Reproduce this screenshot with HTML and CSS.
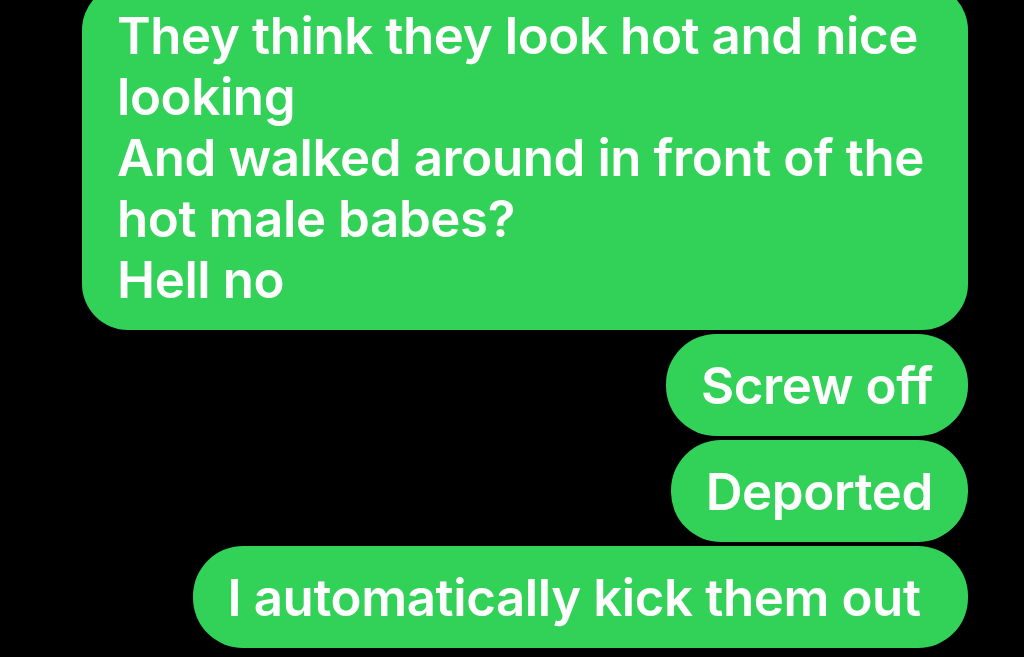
FILE: index.html
```html
<!DOCTYPE html>
<html>
<head>
<meta charset="utf-8">
<link rel="stylesheet" href="styles.css">
</head>
<body>
<div class="thread">
  <div class="bubble wide">They think they look hot and nice looking
And walked around in front of the hot male babes?
Hell no</div>
  <div class="bubble">Screw off</div>
  <div class="bubble">Deported</div>
  <div class="bubble">I automatically kick them out&nbsp;</div>
</div>
</body>
</html>
```

FILE: styles.css
```css
html, body {
  margin: 0;
  padding: 0;
  background: #000;
  height: 100%;
  overflow: hidden;
}
.thread {
  display: flex;
  flex-direction: column;
  align-items: flex-end;
  gap: 4px;
  padding-right: 56px;
  margin-top: -16px;
}
.bubble {
  background: #32d158;
  color: #fff;
  font-family: Inter, "Liberation Sans", sans-serif;
  font-weight: 600;
  font-size: 51px;
  line-height: 61px;
  letter-spacing: -0.4px;
  padding: 20.5px 35px;
  border-radius: 50px;
  white-space: pre-line;
}
.wide {
  max-width: 816px;
  border-radius: 46px;
}
```
